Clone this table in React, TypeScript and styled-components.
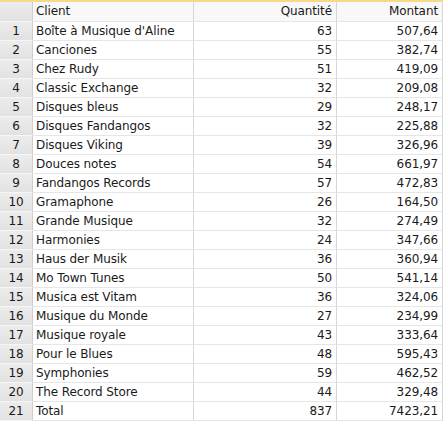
import React from "react";
import styled, { createGlobalStyle } from "styled-components";

const Global = createGlobalStyle`
  html, body { margin: 0; padding: 0; background: #ffffff; }
  body { font-family: "DejaVu Sans", Tahoma, sans-serif; font-size: 12px; letter-spacing: -0.1px; color: #1a1a1a; }
`;

const rows: [string, number, string][] = [
  ["Boîte à Musique d'Aline", 63, "507,64"],
  ["Canciones", 55, "382,74"],
  ["Chez Rudy", 51, "419,09"],
  ["Classic Exchange", 32, "209,08"],
  ["Disques bleus", 29, "248,17"],
  ["Disques Fandangos", 32, "225,88"],
  ["Disques Viking", 39, "326,96"],
  ["Douces notes", 54, "661,97"],
  ["Fandangos Records", 57, "472,83"],
  ["Gramaphone", 26, "164,50"],
  ["Grande Musique", 32, "274,49"],
  ["Harmonies", 24, "347,66"],
  ["Haus der Musik", 36, "360,94"],
  ["Mo Town Tunes", 50, "541,14"],
  ["Musica est Vitam", 36, "324,06"],
  ["Musique du Monde", 27, "234,99"],
  ["Musique royale", 43, "333,64"],
  ["Pour le Blues", 48, "595,43"],
  ["Symphonies", 59, "462,52"],
  ["The Record Store", 44, "329,48"],
  ["Total", 837, "7423,21"],
];

const Grid = styled.div`
  display: grid;
  grid-template-columns: 33px 161px 143px 106px;
  width: 443px;
  border-top: 2px solid #f7d98b;
`;

const Cell = styled.div<{ $align?: "left" | "right"; $head?: boolean }>`
  height: 18px;
  line-height: 19px;
  border-right: 1px solid #d6d6d6;
  border-bottom: 1px solid #e6e6e6;
  padding: 0 4px 0 3px;
  text-align: ${(p) => p.$align ?? "left"};
  background: ${(p) => (p.$head ? "#f8f8f8" : "#ffffff")};
  white-space: nowrap;
  overflow: hidden;
`;

const HeadCell = styled(Cell)`
  height: 19px;
  line-height: 19px;
`;

const RowNum = styled.div<{ $head?: boolean }>`
  height: ${(p) => (p.$head ? "19px" : "18px")};
  line-height: 19px;
  text-align: center;
  background: linear-gradient(#ececec, #e2e2e2);
  border-right: 1px solid #cfcfcf;
  border-bottom: 1px solid #f6f6f6;
  color: #1a1a1a;
`;

export default function App() {
  return (
    <>
      <Global />
      <Grid>
        <RowNum $head />
        <HeadCell $head>Client</HeadCell>
        <HeadCell $head $align="right">Quantité</HeadCell>
        <HeadCell $head $align="right">Montant</HeadCell>
        {rows.map(([c, q, m], i) => (
          <React.Fragment key={i}>
            <RowNum>{i + 1}</RowNum>
            <Cell>{c}</Cell>
            <Cell $align="right">{q}</Cell>
            <Cell $align="right">{m}</Cell>
          </React.Fragment>
        ))}
      </Grid>
    </>
  );
}
